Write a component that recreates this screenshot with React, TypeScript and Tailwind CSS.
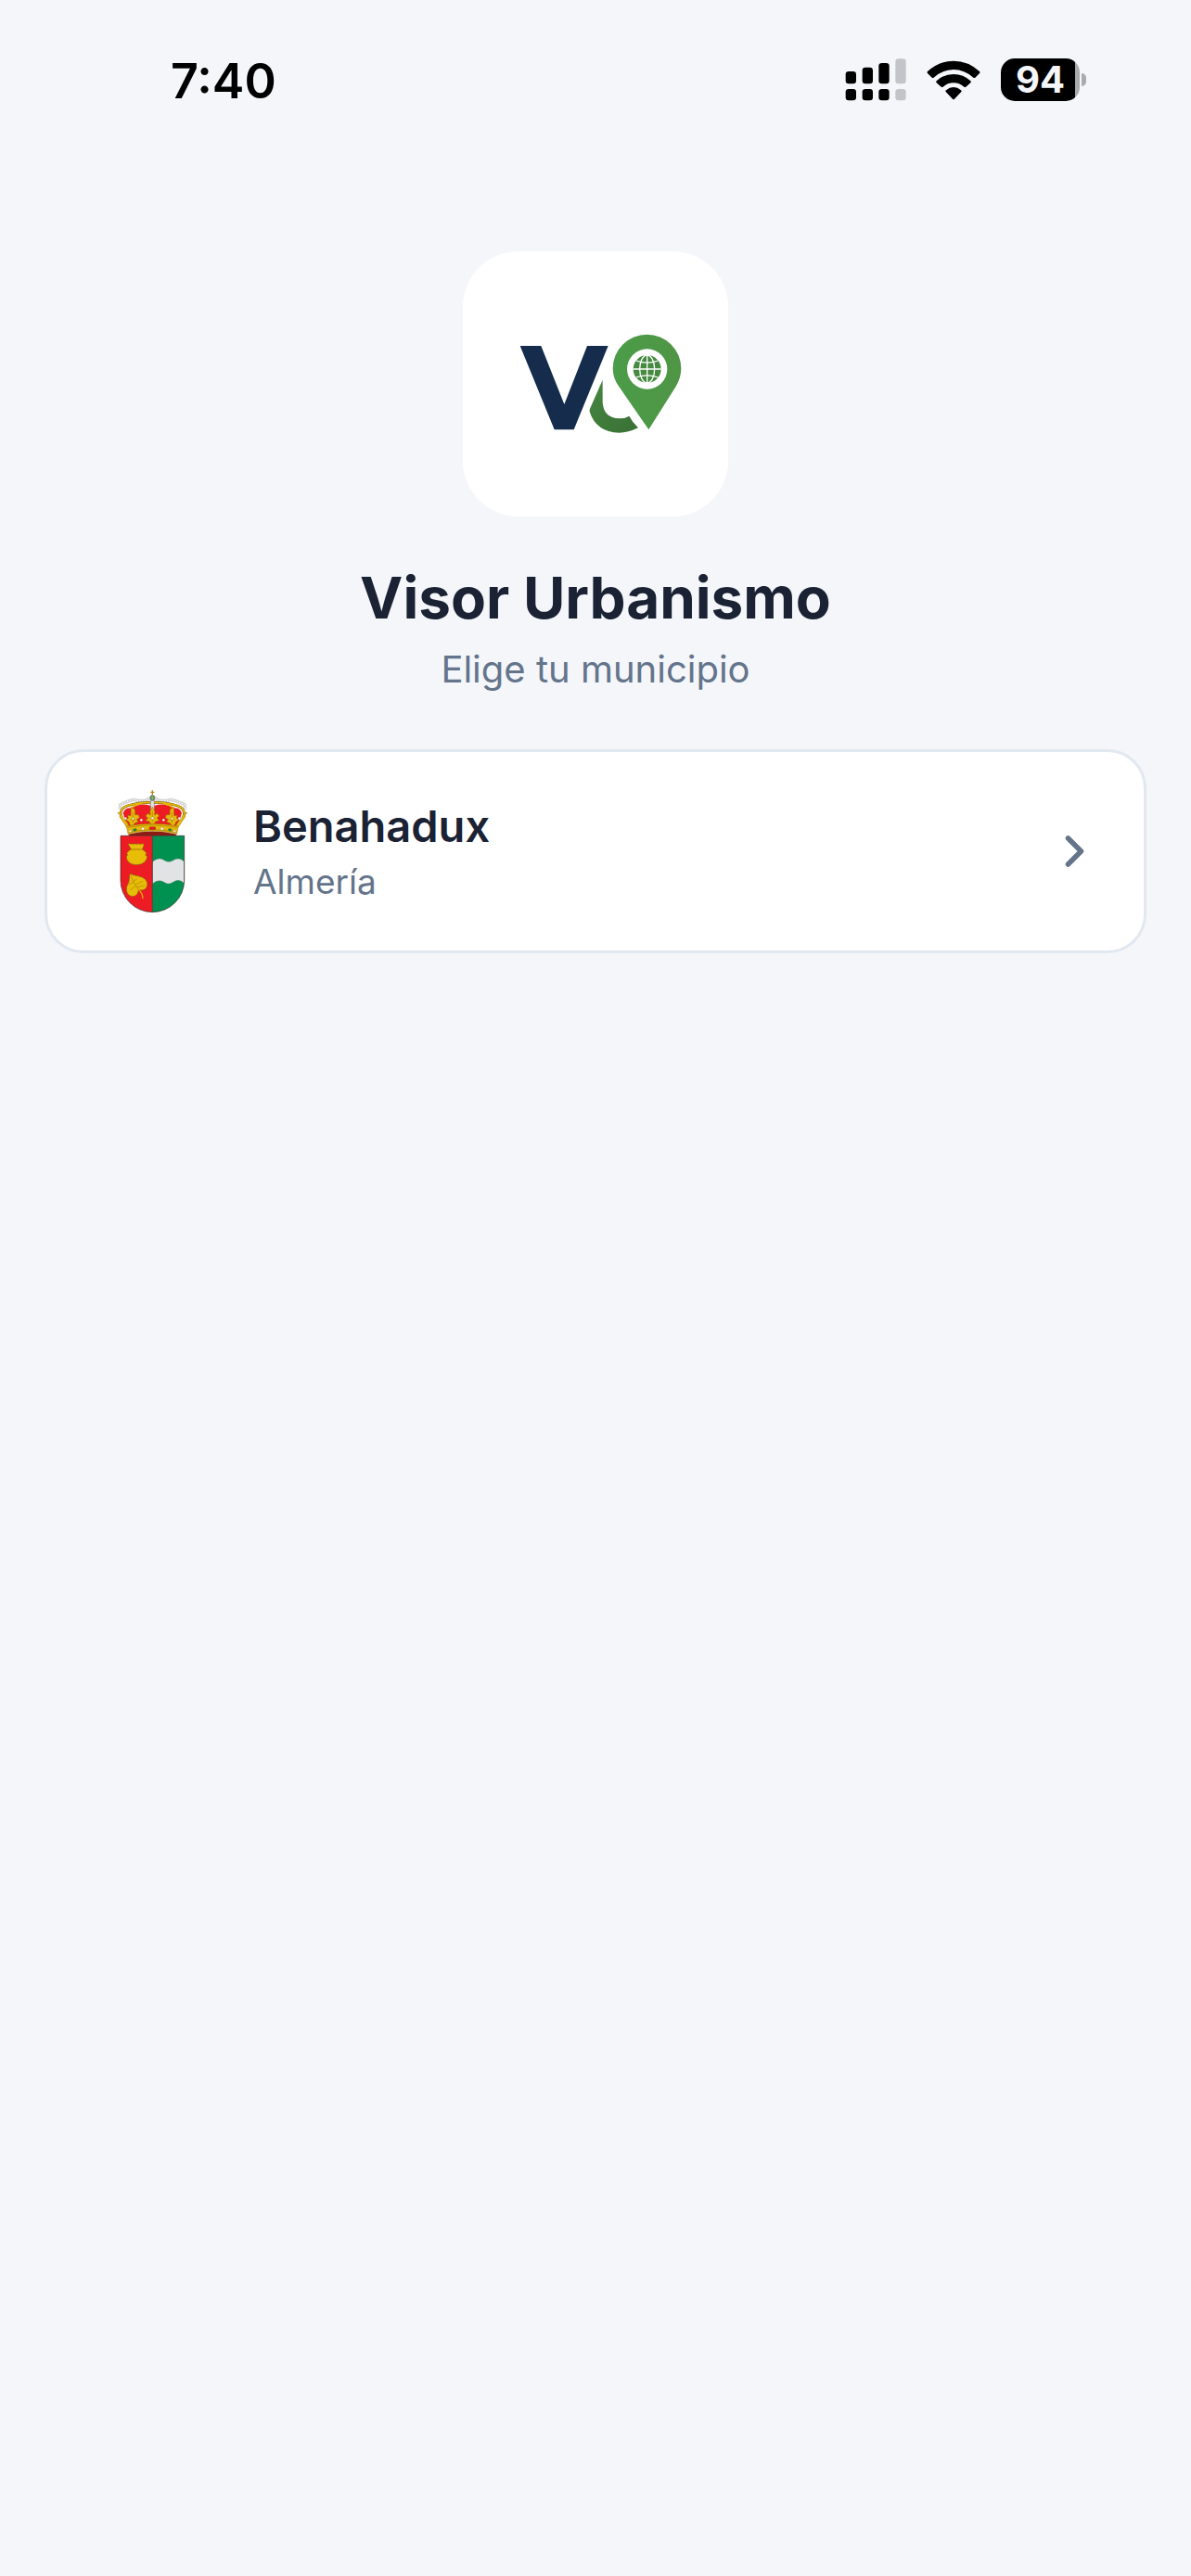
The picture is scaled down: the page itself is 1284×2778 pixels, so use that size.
import { useState } from 'react'

type Municipality = {
  id: string
  name: string
  province: string
  crest: React.ElementType
}

const municipalities: Municipality[] = [
  { id: 'benahadux', name: 'Benahadux', province: 'Almería', crest: BenahaduxCrest },
]

const signalBars = [
  { x: 65, top: 111, on: true },
  { x: 119, top: 98, on: true },
  { x: 172, top: 84, on: true },
  { x: 226, top: 70, on: false },
]

function SignalIcon() {
  return (
    <svg className="h-[46px] w-[66px]" viewBox="63 69 198 138" aria-hidden="true">
      {signalBars.map(({ x, top, on }) => (
        <g key={x} fill={on ? '#000' : '#c3c4c9'}>
          <rect x={x} y={top} width="34" height={151 - top} rx="10" />
          <rect x={x} y="168" width="34" height="37" rx="10" />
        </g>
      ))}
    </svg>
  )
}

function WifiIcon() {
  return (
    <svg className="h-[43px] w-[58px]" viewBox="326 72 174 129" aria-hidden="true">
      <path d="M329 114Q326 111 329 108Q366 74 413 74T497 108Q500 111 497 114L483 128Q480 130 477 128Q448 102 413 102T349 128Q346 130 343 128Z" />
      <path d="M358 145Q355 142 358 139Q381 117 413 117T468 139Q471 142 468 145L453 158Q450 160 447 158Q432 145 413 145T379 158Q376 160 373 158Z" />
      <path d="M388 174Q385 171 389 169Q400 159 413 159T437 169Q441 171 438 174L416 197Q413 200 410 197Z" />
    </svg>
  )
}

function Battery({ level }: { level: number }) {
  return (
    <div className="flex items-center gap-[2px]">
      <div
        className="flex h-[46px] w-[85px] items-center justify-center rounded-[15px] text-[40px] leading-[46px] font-bold text-[#f4f6fa]"
        style={{ background: `linear-gradient(90deg, #000 ${level}%, #a9aaae ${level}%)` }}
      >
        {level}
      </div>
      <div className="h-[14px] w-[5px] rounded-r-full bg-[#a9aaae]" />
    </div>
  )
}

function StatusBar() {
  return (
    <header className="flex h-[172px] items-center justify-between pr-[113px] pl-[184px] text-black">
      <time className="pt-[3px] text-[52px] leading-[60px] font-semibold">7:40</time>
      <div className="flex items-center gap-[22px]">
        <SignalIcon />
        <WifiIcon />
        <Battery level={94} />
      </div>
    </header>
  )
}

function AppLogo() {
  return (
    <svg className="h-full w-full" viewBox="-123 -207 858 858" role="img" aria-label="Visor Urbanismo">
      <defs>
        <linearGradient id="hook" x1="0" y1="0" x2="1" y2="1">
          <stop offset="0" stopColor="#45883f" />
          <stop offset="1" stopColor="#3a6f36" />
        </linearGradient>
        <linearGradient id="pin" x1="0" y1="0" x2="1" y2="0">
          <stop offset="0" stopColor="#4b9c48" />
          <stop offset="1" stopColor="#4f9545" />
        </linearGradient>
      </defs>
      <polygon points="62,99 130,99 205,288 279,99 347,99 236,370 173,370" fill="#152c4c" />
      <path
        d="M329 209V280Q331 333 384 334Q402 334 415 326Q426 347 444 364Q412 380 382 380Q308 378 287 312Q286 306 289 300Z"
        fill="url(#hook)"
      />
      <path
        d="M478 370L380 228Q362 202 362 172A110.5 110 0 0 1 583 172Q583 202 566 230Z"
        fill="url(#pin)"
      />
      <circle cx="473" cy="174" r="65" fill="#fff" />
      <circle cx="473" cy="174" r="45" fill="#458a40" />
      <g fill="none" stroke="#fff" strokeWidth="4">
        <path d="M473 129V219M428 174H518" />
        <ellipse cx="473" cy="174" rx="24" ry="45" />
        <path d="M438 147Q473 160 508 147M438 201Q473 188 508 201" />
      </g>
    </svg>
  )
}

const pearls = [
  [58, 93], [59, 84], [67, 79], [75, 76], [83, 73], [91, 70], [99, 68], [107, 68],
  [115, 70], [123, 71], [131, 71], [139, 70], [146, 68], [152, 64],
]

function BenahaduxCrest() {
  return (
    <svg className="h-full w-full" viewBox="-51 18 432 432" aria-hidden="true">
      {/* crown */}
      <path d="M84 179Q163 160 242 179L238 184H88Z" fill="#8c1c14" />
      <path
        d="M68 110Q74 94 92 94Q124 76 156 86H170Q202 76 234 94Q252 94 258 110Q252 134 240 156Q163 140 86 156Q72 134 68 110Z"
        fill="#ed1c24"
      />
      <g fill="#f5f5f5" stroke="#8d8d92" strokeWidth="1.2">
        {pearls.map(([x, y]) => (
          <g key={x}>
            <circle cx={x} cy={y} r="4.5" />
            <circle cx={326 - x} cy={y} r="4.5" />
          </g>
        ))}
      </g>
      <g fill="none" strokeLinecap="round">
        <path d="M61 116Q58 94 84 86Q118 76 157 76M265 116Q268 94 242 86Q208 76 169 76" stroke="#76590c" strokeWidth="8" />
        <path d="M61 116Q58 94 84 86Q118 76 157 76M265 116Q268 94 242 86Q208 76 169 76" stroke="#e6b80a" strokeWidth="5" />
        <path d="M94 94Q106 84 124 80M232 94Q220 84 202 80" stroke="#e6b80a" strokeWidth="5" />
      </g>
      <path d="M157 70H169V98L163 106L157 98Z" fill="#dfe3e8" stroke="#7d7657" strokeWidth="2" />
      <circle cx="163" cy="61" r="8" fill="#2484a8" stroke="#2d5360" strokeWidth="1.5" />
      <path d="M154 61H172M163 53V69" stroke="#e6b80a" strokeWidth="2.5" />
      <path d="M163 37V55M157 43H169" stroke="#b58b1a" strokeWidth="4" />
      <g fill="#e6b80a" stroke="#8f6b08" strokeWidth="1.4" strokeLinejoin="round">
        <path d="M50 110Q56 106 60 113Q68 118 69 128Q82 138 88 154L80 157Q70 142 62 130Q54 122 58 116Z" />
        <path d="M276 110Q270 106 266 113Q258 118 257 128Q244 138 238 154L246 157Q256 142 264 130Q272 122 268 116Z" />
        <path d="M163 90L171 106L169 117L178 112L185 120L177 127L186 134L173 138L166 148H160L153 138L140 134L149 127L141 120L148 112L157 117L155 106Z" />
        <path d="M94 92L106 98L107 116L118 116L121 125L112 131L117 139L106 143L100 151L91 150L87 139L77 133L85 127L83 118L93 119Z" />
        <path d="M232 92L220 98L219 116L208 116L205 125L214 131L209 139L220 143L226 151L235 150L239 139L249 133L241 127L243 118L233 119Z" />
        <path d="M79 153Q163 136 247 153L242 178Q163 158 84 178Z" />
      </g>
      <path d="M83 157Q163 142 243 157M87 173Q163 155 239 173" fill="none" stroke="#a07a0a" strokeWidth="2" />
      <g fill="none" stroke="#a67d08" strokeWidth="2">
        <path d="M163 104V138M155 126Q163 134 171 126M100 108V142M92 130Q100 138 108 130M226 108V142M218 130Q226 138 234 130" />
      </g>
      <g fill="#fff" stroke="#85713a" strokeWidth="1">
        <circle cx="163" cy="127" r="4" />
        <circle cx="127" cy="133" r="4" />
        <circle cx="199" cy="133" r="4" />
        <circle cx="100" cy="129" r="3.5" />
        <circle cx="226" cy="129" r="3.5" />
        <circle cx="76" cy="128" r="4" />
        <circle cx="250" cy="128" r="4" />
        <circle cx="132" cy="161" r="4.5" />
        <circle cx="194" cy="161" r="4.5" />
        <circle cx="91" cy="169" r="3.5" />
        <circle cx="235" cy="169" r="3.5" />
      </g>
      <rect x="153" y="155" width="20" height="9" rx="3" fill="#e01b22" stroke="#8c3a10" />
      <path d="M99 165L107 160L113 164L106 169ZM227 165L219 160L213 164L220 169Z" fill="#0b8a42" stroke="#344d14" />

      {/* shield */}
      <path d="M60 184H163V431A103 103 0 0 1 60 328Z" fill="#ed1c24" />
      <path d="M163 184H266V328A103 103 0 0 1 163 431Z" fill="#009150" />
      <path
        d="M163 269Q174 258 186 258C198 258 204 268 216 268C228 268 234 258 246 258Q256 258 266 268V338Q256 328 246 328C234 328 228 339 216 339C204 339 198 329 186 329Q174 329 163 339Z"
        fill="#e2e3e5"
        stroke="#68736c"
        strokeWidth="1"
      />
      <path d="M60 184H266V328A103 103 0 0 1 60 328ZM163 184V431" fill="none" stroke="#33251d" strokeWidth="2" />
      <g fill="#e7bd08" stroke="#8b5d09" strokeWidth="2" strokeLinejoin="round">
        <path d="M84 211Q88 207 92 211Q96 208 101 211Q106 208 112 211Q118 208 124 211Q132 207 136 212Q134 220 130 228Q142 234 144 242L140 246L146 250Q146 260 139 268Q128 278 112 278Q95 278 86 269Q78 261 79 250L83 246L80 242Q82 233 94 228Q90 220 84 211Z" />
        <path d="M94 228H130" />
        <path d="M90 307C108 314 126 314 136 322C150 332 149 350 138 357C131 361 124 361 118 358C118 370 110 380 99 380C86 380 79 368 79 356C79 344 88 336 88 326Q88 316 90 307Z" />
      </g>
      <path d="M118 358Q130 368 132 386" fill="none" stroke="#d9ad08" strokeWidth="4" strokeLinecap="round" />
      <path d="M92 311Q102 338 118 358M102 334L86 342M109 346L91 359M101 332L112 324M108 342L132 331M114 350L138 345" fill="none" stroke="#9b7209" strokeWidth="1.6" />
    </svg>
  )
}

function ChevronIcon() {
  return (
    <svg className="h-[60px] w-[60px] shrink-0" viewBox="0 0 60 60" fill="none" aria-hidden="true">
      <path d="M20.5 16L34.5 30L20.5 44" stroke="#64748b" strokeWidth="5.5" strokeLinecap="round" strokeLinejoin="round" />
    </svg>
  )
}

export default function App() {
  const [selected, setSelected] = useState<string | null>(null)

  return (
    <div className="min-h-screen bg-[#f4f6fa] font-['Inter',sans-serif] text-[#1a2233]">
      <StatusBar />

      <main className="px-12 pt-[99px]">
        <div className="flex flex-col items-center">
          <div className="h-[286px] w-[286px] overflow-hidden rounded-[60px] bg-white">
            <AppLogo />
          </div>
          <h1 className="mt-12 text-[62px] leading-[80px] font-bold">Visor Urbanismo</h1>
          <p className="mt-3 text-[40px] leading-[50px] text-[#64748b]">Elige tu municipio</p>
        </div>

        <ul className="mt-[61px] flex flex-col gap-9">
          {municipalities.map(({ id, name, province, crest: Crest }) => (
            <li key={id}>
              <button
                onClick={() => setSelected(id)}
                aria-pressed={selected === id}
                className="flex w-full items-center gap-9 rounded-[42px] border-[3px] border-[#e2e8f0] bg-white px-[42px] py-[35px] text-left"
              >
                <span className="h-36 w-36 shrink-0">
                  <Crest />
                </span>
                <span className="flex flex-1 flex-col pt-1.5">
                  <span className="text-[47px] leading-[60px] font-semibold">{name}</span>
                  <span className="text-[37px] leading-[60px] text-[#64748b]">{province}</span>
                </span>
                <ChevronIcon />
              </button>
            </li>
          ))}
        </ul>
      </main>
    </div>
  )
}
